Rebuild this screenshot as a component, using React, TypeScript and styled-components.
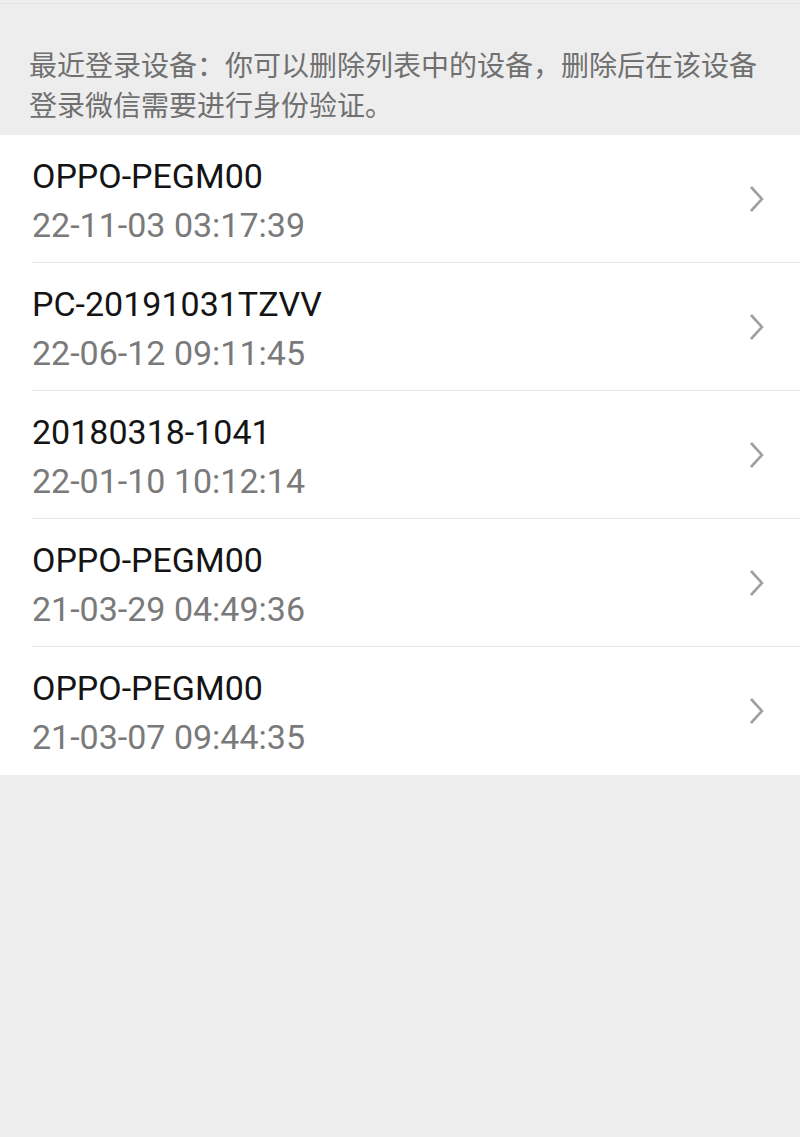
import React from 'react';
import styled, { createGlobalStyle } from 'styled-components';

const GlobalStyle = createGlobalStyle`
  html, body {
    margin: 0;
    padding: 0;
    background: #ededed;
  }
  body {
    font-family: Roboto, "Noto Sans CJK SC", sans-serif;
  }
`;

const Page = styled.div`
  width: 800px;
  min-height: 1137px;
  background: #ededed;
  border-top: 1px solid #e2e2e2;
  margin-top: 3px;
  box-sizing: border-box;
`;

const Notice = styled.p`
  margin: 0;
  padding: 40px 28px 11px 29px;
  font-family: "Noto Sans CJK SC", sans-serif;
  font-size: 28px;
  line-height: 40px;
  color: #707070;
`;

const List = styled.ul`
  margin: 0;
  padding: 0;
  list-style: none;
  background: #fff;
`;

const Item = styled.li<{ $last?: boolean }>`
  display: flex;
  align-items: center;
  height: 128px;
  padding-left: 32px;
  box-sizing: border-box;
  position: relative;

  &::after {
    content: '';
    display: ${(p) => (p.$last ? 'none' : 'block')};
    position: absolute;
    left: 32px;
    right: 0;
    bottom: 0;
    height: 1px;
    background: #e5e5e5;
  }
`;

const Info = styled.div`
  flex: 1;
  display: flex;
  flex-direction: column;
  gap: 9px;
  padding-top: 2px;
`;

const Name = styled.div`
  font-size: 34px;
  line-height: 40px;
  color: #141414;
`;

const Time = styled.div`
  font-size: 34px;
  line-height: 40px;
  color: #7a7a7a;
`;

const Arrow = styled.svg`
  width: 18px;
  height: 30px;
  margin-right: 34px;
`;

const devices = [
  { name: 'OPPO-PEGM00', time: '22-11-03 03:17:39' },
  { name: 'PC-20191031TZVV', time: '22-06-12 09:11:45' },
  { name: '20180318-1041', time: '22-01-10 10:12:14' },
  { name: 'OPPO-PEGM00', time: '21-03-29 04:49:36' },
  { name: 'OPPO-PEGM00', time: '21-03-07 09:44:35' },
];

export default function App() {
  return (
    <>
      <GlobalStyle />
      <Page>
        <Notice>
          最近登录设备：你可以删除列表中的设备，删除后在该设备登录微信需要进行身份验证。
        </Notice>
        <List>
          {devices.map((d, i) => (
            <Item key={i} $last={i === devices.length - 1}>
              <Info>
                <Name>{d.name}</Name>
                <Time>{d.time}</Time>
              </Info>
              <Arrow viewBox="0 0 18 30">
                <path d="M3 3 L14 15 L3 27" fill="none" stroke="#a0a0a0" strokeWidth="2.6" />
              </Arrow>
            </Item>
          ))}
        </List>
      </Page>
    </>
  );
}
